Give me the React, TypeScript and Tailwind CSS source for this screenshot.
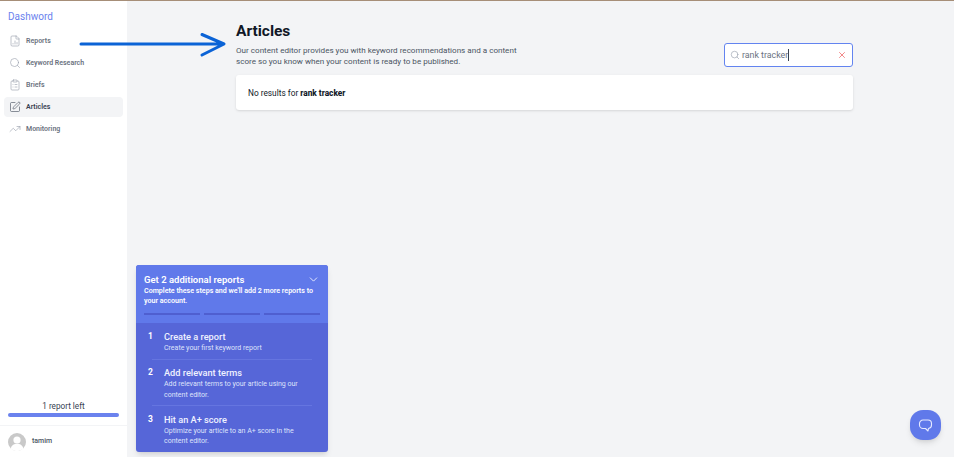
import React from 'react';
import { FileBarChart2, Search, ClipboardList, SquarePen, TrendingUp, ChevronDown, X } from 'lucide-react';

const navItems = [
  { label: 'Reports', Icon: FileBarChart2 },
  { label: 'Keyword Research', Icon: Search },
  { label: 'Briefs', Icon: ClipboardList },
  { label: 'Articles', Icon: SquarePen, active: true },
  { label: 'Monitoring', Icon: TrendingUp },
];

const steps = [
  { n: 1, title: 'Create a report', text: 'Create your first keyword report' },
  { n: 2, title: 'Add relevant terms', text: 'Add relevant terms to your article using our content editor.' },
  { n: 3, title: 'Hit an A+ score', text: 'Optimize your article to an A+ score in the content editor.' },
];

const Sidebar = () => (
  <aside className="w-[128px] shrink-0 bg-white border-r border-gray-100 flex flex-col">
    <div className="pl-2 pt-[9px] text-[10px] leading-[14px] text-[#6b82ee]">Dashword</div>
    <nav className="mt-[7px] px-[4px] flex flex-col gap-[2px]">
      {navItems.map(({ label, Icon, active }) => (
        <div
          key={label}
          className={`h-5 rounded flex items-center gap-[5px] pl-[5px] text-[7px] font-semibold ${
            active ? 'bg-[#f3f4f6] text-[#374151]' : 'text-[#6b7280]'
          }`}
        >
          <Icon size={12} strokeWidth={1.3} className={active ? 'text-[#4b5563]' : 'text-[#9ca3af]'} />
          {label}
        </div>
      ))}
    </nav>
    <div className="mt-auto">
      <div className="px-2 pb-[8px]">
        <div className="text-center text-[8.2px] leading-[11px] text-[#374151]">1 report left</div>
        <div className="mt-[1px] h-1 rounded-full bg-[#6b82ee]" />
      </div>
      <div className="h-[32px] border-t border-gray-100 flex items-center gap-[6px] pl-2">
        <svg width="18" height="18" viewBox="0 0 18 18">
          <circle cx="9" cy="9" r="9" fill="#c9c9c9" />
          <circle cx="9" cy="7" r="3.6" fill="#fff" />
          <path d="M2.6 15.4c1-3.4 3.6-4.6 6.4-4.6s5.4 1.2 6.4 4.6A9 9 0 0 1 2.6 15.4z" fill="#fff" />
        </svg>
        <span className="text-[7px] font-medium text-[#4b5563]">tamim</span>
      </div>
    </div>
  </aside>
);

export default function App() {
  return (
    <div
      className="relative h-[457px] w-[954px] overflow-hidden bg-[#f3f4f6] flex flex-col"
      style={{ fontFamily: 'Roboto, sans-serif' }}
    >
      <div className="h-px bg-[#a68e78] shrink-0" />
      <div className="flex flex-1 min-h-0">
        <Sidebar />
        <main className="pl-[108px] w-[725px]">
          <div className="flex items-end justify-between pt-[19px]">
            <div>
              <h1 className="text-[15.5px] leading-[22px] font-bold text-[#111827]">Articles</h1>
              <p className="mt-[3px] w-[290px] text-[8.1px] leading-[11px] text-[#4b5563]">
                Our content editor provides you with keyword recommendations and a content score so you know when your content is ready to be published.
              </p>
            </div>
            <div className="h-6 w-[129px] rounded-[3px] border border-[#6384f0] bg-white flex items-center pl-[5px] pr-[5px]">
              <Search size={10} strokeWidth={1.6} className="text-[#9ca3af]" />
              <span className="ml-[2px] text-[8.8px] text-[#6b7280] border-r border-[#374151] leading-[12px]">rank tracker</span>
              <X size={10} strokeWidth={1.8} className="ml-auto text-[#ee6060]" />
            </div>
          </div>
          <div className="mt-[8px] h-[35px] pt-[1px] rounded-[3px] bg-white shadow-sm flex items-center pl-3 text-[8.3px] text-[#111827]">
            <span>
              No results for <b className="font-extrabold">rank tracker</b>
            </span>
          </div>
        </main>
      </div>

      {/* arrow annotation pasted on top of the page */}
      <svg className="absolute left-[79px] top-[32px]" width="148" height="26" viewBox="0 0 148 26" fill="none">
        <path d="M2 12H144M123 2.5l22 9.5L123 23" stroke="#0b63d6" strokeWidth="3" strokeLinecap="round" strokeLinejoin="round" />
      </svg>

      {/* onboarding popup */}
      <div className="absolute left-[136px] top-[265px] w-[192px] h-[187px] rounded-[3px] overflow-hidden bg-[#5666d8] text-white flex flex-col shadow-md">
        <div className="h-[58px] shrink-0 bg-[#6079ea] px-2 pt-[9px] relative">
          <div className="text-[9.5px] leading-[12px] font-semibold">Get 2 additional reports</div>
          <ChevronDown size={13} strokeWidth={1.5} className="absolute right-[8px] top-[8px]" />
          <p className="text-[7.1px] leading-[10px] font-semibold">
            Complete these steps and we'll add 2 more reports to your account.
          </p>
          <div className="mt-[7px] grid grid-cols-3 gap-[4px]">
            <div className="h-[2px] bg-[#4f5fd0]" />
            <div className="h-[2px] bg-[#4f5fd0]" />
            <div className="h-[2px] bg-[#4f5fd0]" />
          </div>
        </div>
        <div className="px-4 pt-[7px]">
          {steps.map((s, i) => (
            <div key={s.n} className={`flex ${i < 2 ? 'pb-[5px] mb-[6.5px] border-b border-[#6575e0]' : ''}`}>
              <div className="w-[12px] -ml-1 mr-[4px] text-[8.5px] leading-[12px] font-bold">{s.n}</div>
              <div className="flex-1">
                <div className="text-[9.2px] leading-[13px] font-medium text-[#f0f2ff]">{s.title}</div>
                <div className="text-[7px] leading-[10.5px] text-[#dfe3fb]">{s.text}</div>
              </div>
            </div>
          ))}
        </div>
      </div>

      {/* help bubble */}
      <div className="absolute left-[910px] top-[410px] w-[31px] h-[30px] rounded-[13px] bg-[#6079ea] shadow-md flex items-center justify-center">
        <svg width="15" height="15" viewBox="0 0 15 15" fill="none">
          <path d="M5 2h5a3.5 3.5 0 0 1 3.5 3.5V7A3.5 3.5 0 0 1 10.5 10.5L10 13 7.5 10.5H5A3.5 3.5 0 0 1 1.5 7V5.5A3.5 3.5 0 0 1 5 2z" stroke="#e6eaff" strokeWidth="1.1" strokeLinejoin="round" />
        </svg>
      </div>
    </div>
  );
}
